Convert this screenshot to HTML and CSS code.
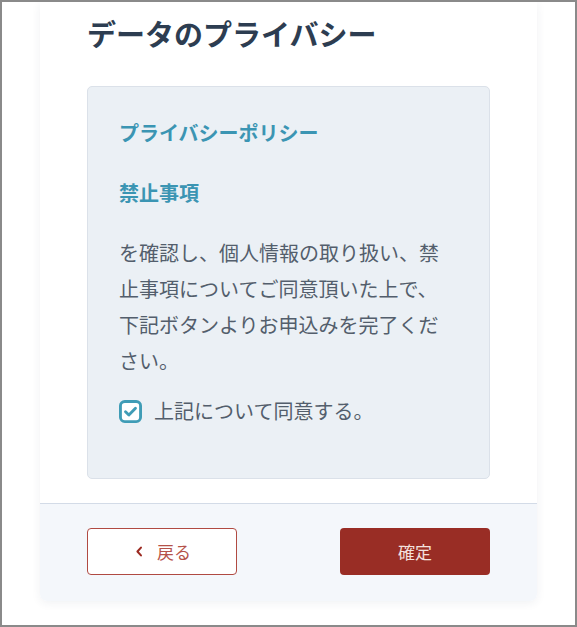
FILE: index.html
```html
<!DOCTYPE html>
<html lang="ja">
<head>
<meta charset="utf-8">
<title>データのプライバシー</title>
<link rel="stylesheet" href="styles.css">
</head>
<body>
<div class="frame">
  <div class="card">
    <div class="card-body">
      <h1 class="page-title">データのプライバシー</h1>
      <div class="notice">
        <p class="notice-link">プライバシーポリシー</p>
        <p class="notice-link">禁止事項</p>
        <p class="notice-text">を確認し、個人情報の取り扱い、禁止事項についてご同意頂いた上で、下記ボタンよりお申込みを完了ください。</p>
        <label class="agree">
          <span class="checkbox">
            <svg viewBox="0 0 24 24" width="23" height="23" aria-hidden="true">
              <rect x="1.5" y="1.5" width="21" height="21" rx="4.5" fill="#ffffff" stroke="#3f9cb6" stroke-width="3"/>
              <path d="M6.8 12.2 L10.3 15.6 L17.2 8.6" fill="none" stroke="#3f9cb6" stroke-width="3" stroke-linecap="round" stroke-linejoin="round"/>
            </svg>
          </span>
          <span class="agree-text">上記について同意する。</span>
        </label>
      </div>
    </div>
    <div class="card-footer">
      <button class="btn btn-back" type="button">
        <svg class="chev" viewBox="0 0 10 14" width="8" height="11" aria-hidden="true">
          <path d="M7.5 2 L3 7 L7.5 12" fill="none" stroke="#9c2b22" stroke-width="2.6" stroke-linecap="round" stroke-linejoin="round"/>
        </svg>
        <span>戻る</span>
      </button>
      <button class="btn btn-confirm" type="button">確定</button>
    </div>
  </div>
</div>
</body>
</html>
```

FILE: styles.css
```css
html, body {
  margin: 0;
  padding: 0;
}

body {
  font-family: "Noto Sans CJK JP", "Noto Sans", sans-serif;
  background: #ffffff;
}

.frame {
  box-sizing: border-box;
  width: 577px;
  height: 627px;
  border: 2px solid #8a8a8a;
  background: #ffffff;
  overflow: hidden;
  padding-left: 38px;
}

.card {
  width: 497px;
  background: #ffffff;
  border-radius: 0 0 7px 7px;
  box-shadow: 0 2px 10px rgba(40, 60, 90, 0.07);
}

.card-body {
  padding: 11px 47px 24px 47px;
}

.page-title {
  margin: 0 0 32px 0;
  font-size: 29px;
  line-height: 41px;
  font-weight: 700;
  color: #2d3d51;
}

.notice {
  background: #ebf0f5;
  border: 1px solid #dbe1e9;
  border-radius: 5px;
  padding: 28px 41px 49px 31px;
}

.notice p {
  margin: 0;
  font-size: 20px;
  line-height: 36px;
}

.notice-link {
  color: #3b95b3;
  font-weight: 700;
  margin-bottom: 24px !important;
}

.notice-text {
  color: #535e6c;
  margin-bottom: 14px !important;
}

.agree {
  display: flex;
  align-items: center;
  gap: 12px;
  height: 36px;
}

.checkbox {
  display: flex;
  width: 23px;
  height: 23px;
}

.agree-text {
  font-size: 20px;
  line-height: 36px;
  color: #535e6c;
}

.card-footer {
  display: flex;
  justify-content: space-between;
  background: #f4f7fb;
  border-top: 1px solid #d3dbe7;
  border-radius: 0 0 7px 7px;
  padding: 24px 47px 26px 47px;
}

.btn {
  box-sizing: border-box;
  width: 150px;
  height: 47px;
  border-radius: 4px;
  font-family: "Noto Sans CJK JP", "Noto Sans", sans-serif;
  font-size: 17px;
  display: flex;
  align-items: center;
  justify-content: center;
  cursor: pointer;
}

.btn-back {
  background: #ffffff;
  border: 1.5px solid #b04a42;
  color: #b5524a;
  gap: 14px;
  padding-right: 4px;
}

.chev {
  display: block;
}

.btn-confirm {
  background: #992d25;
  border: none;
  color: #f3e1de;
  padding-bottom: 2px;
}
```
